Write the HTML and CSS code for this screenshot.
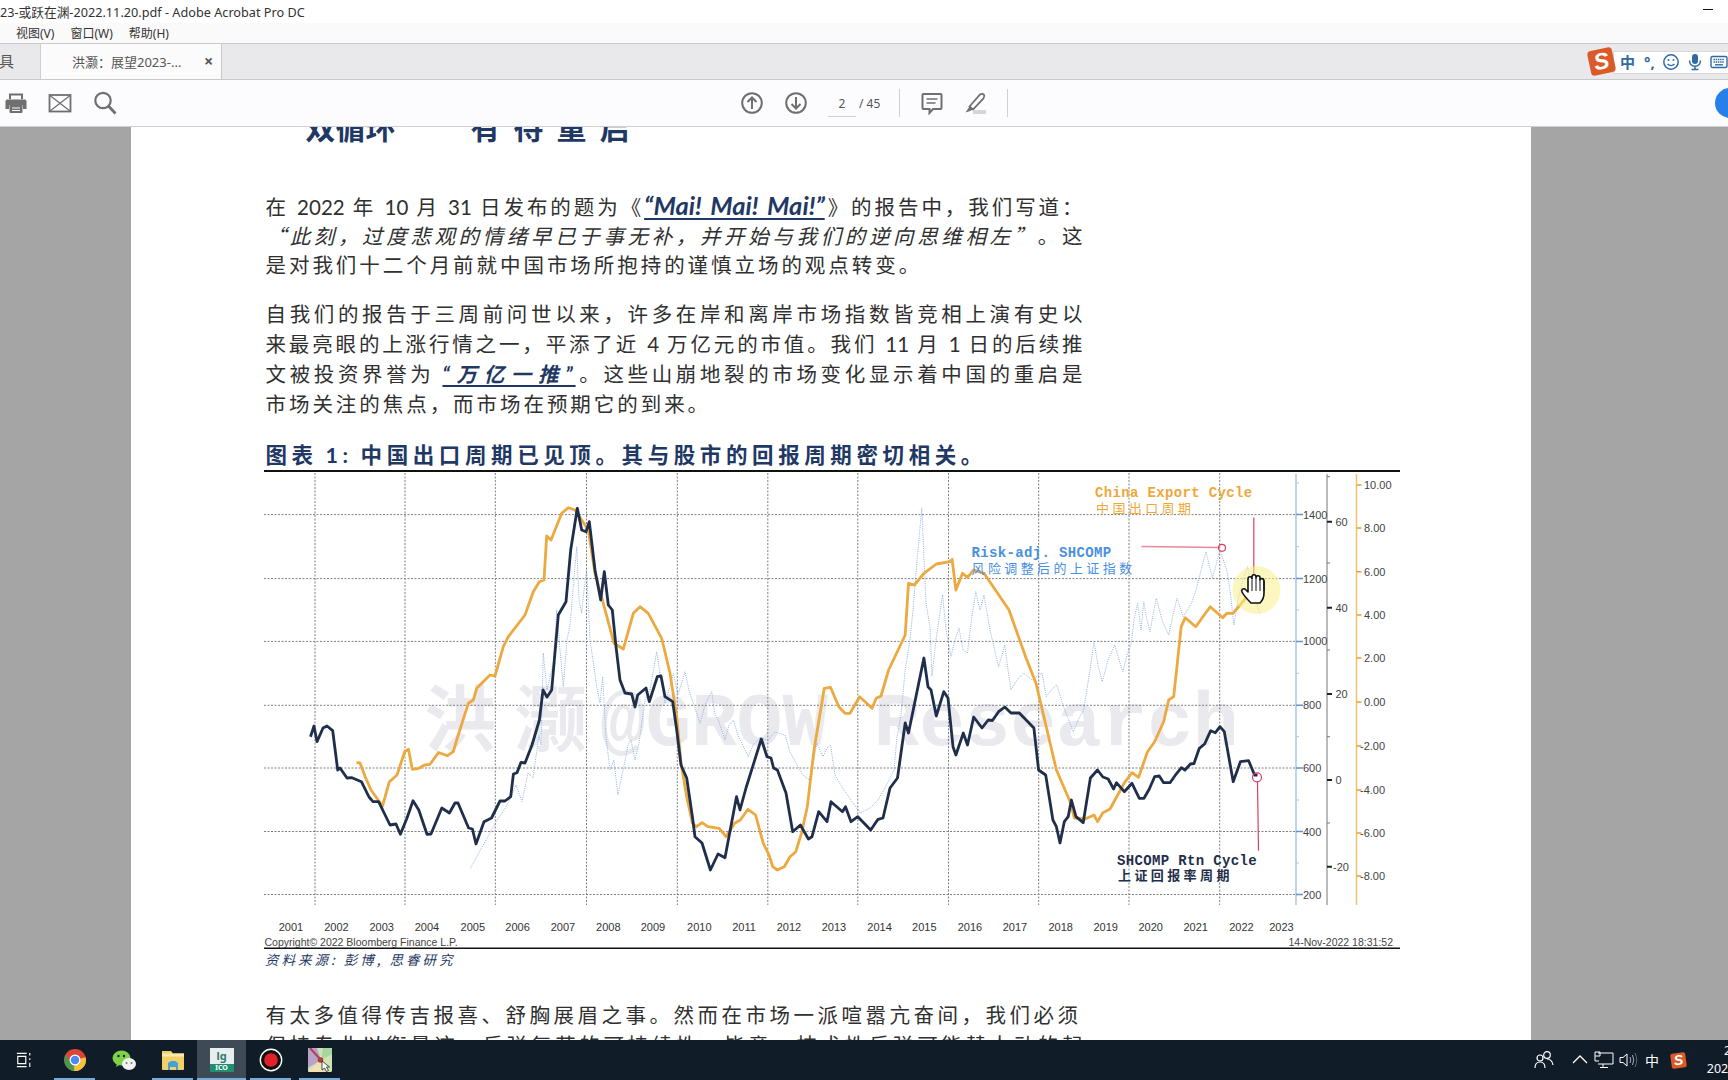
FILE: index.html
```html
<!DOCTYPE html>
<html lang="zh">
<head>
<meta charset="utf-8">
<title>Adobe Acrobat Pro DC</title>
<link rel="stylesheet" href="styles.css">
</head>
<body>
<div class="app">
  <div class="titlebar">
    <span class="title-text">23-或跃在渊-2022.11.20.pdf - Adobe Acrobat Pro DC</span>
    <span class="minimize"></span>
  </div>
  <div class="menubar">
    <span class="menu-item">视图(V)</span>
    <span class="menu-item">窗口(W)</span>
    <span class="menu-item">帮助(H)</span>
  </div>
  <div class="tabbar">
    <span class="tab-tools">具</span>
    <div class="tab-active">
      <span class="tab-name">洪灏&#xFF1A;展望2023-...</span>
      <span class="tab-close">×</span>
    </div>
    <div class="ime">
      <span class="ime-logo">S</span>
      <div class="ime-bar">
        <span class="ime-zh">中</span>
        <span class="ime-punc">°,</span>
        <svg class="ime-icon" viewBox="0 0 18 18"><circle cx="9" cy="9" r="7.2" fill="none" stroke="#2f6aa3" stroke-width="1.5"/><circle cx="6.5" cy="7" r="1" fill="#2f6aa3"/><circle cx="11.5" cy="7" r="1" fill="#2f6aa3"/><path d="M5.5 11q3.5 3.2 7 0" fill="none" stroke="#2f6aa3" stroke-width="1.3"/></svg>
        <svg class="ime-icon" viewBox="0 0 18 18"><rect x="6" y="1" width="6" height="10" rx="3" fill="#2f6aa3"/><path d="M3.5 7.5q.3 5.7 5.5 5.7t5.500-5.700M9 13v3M5.500 16.500h7" fill="none" stroke="#2f6aa3" stroke-width="1.5"/></svg>
        <svg class="ime-icon" viewBox="0 0 18 18"><rect x="1" y="3.500" width="16" height="11" rx="1.500" fill="none" stroke="#2f6aa3" stroke-width="1.400"/><path d="M3.500 6.500h11M3.500 9h11" stroke="#2f6aa3" stroke-width="1.500" stroke-dasharray="1.500 .7"/><path d="M5 11.800h8" stroke="#2f6aa3" stroke-width="1.400"/></svg>
      </div>
    </div>
  </div>
  <div class="toolbar">
    <svg class="tool t-print" viewBox="0 0 24 24"><path d="M6 8V3.500h12V8" fill="none" stroke="#6f6f6f" stroke-width="2"/><path d="M3 8.500h18a1.500 1.500 0 0 1 1.500 1.500v8h-3.500v-3.500H5V18H1.500v-8A1.500 1.500 0 0 1 3 8.500z" fill="#6f6f6f"/><rect x="5.500" y="14" width="13" height="8" rx="1" fill="#6f6f6f"/><path d="M8 17h8M8 19.500h8" stroke="#fff" stroke-width="1.100"/></svg>
    <svg class="tool t-mail" viewBox="0 0 24 24"><rect x="1.500" y="4" width="21" height="16.500" fill="none" stroke="#6f6f6f" stroke-width="1.800"/><path d="M2 4.500l20 15.500M22 4.500L2 20" fill="none" stroke="#6f6f6f" stroke-width="1.300"/></svg>
    <svg class="tool t-search" viewBox="0 0 24 24"><circle cx="10" cy="9.500" r="7.700" fill="none" stroke="#6f6f6f" stroke-width="2.200"/><path d="M15.500 15l7 7.500" stroke="#6f6f6f" stroke-width="2.800"/></svg>
    <svg class="tool t-up" viewBox="0 0 24 24"><circle cx="12" cy="12" r="9.800" fill="none" stroke="#6f6f6f" stroke-width="2"/><path d="M12 18V6.500M7.500 11L12 6.500l4.500 4.500" fill="none" stroke="#6f6f6f" stroke-width="2"/></svg>
    <svg class="tool t-down" viewBox="0 0 24 24"><circle cx="12" cy="12" r="9.800" fill="none" stroke="#6f6f6f" stroke-width="2"/><path d="M12 6v11.500M7.500 13l4.500 4.500 4.500-4.500" fill="none" stroke="#6f6f6f" stroke-width="2"/></svg>
    <span class="page-input">2</span>
    <span class="page-total">/ 45</span>
    <span class="sep sep-a"></span>
    <svg class="tool t-comment" viewBox="0 0 24 24"><path d="M3.500 3h17a1 1 0 0 1 1 1v13a1 1 0 0 1-1 1H13l-3.500 4v-4h-6a1 1 0 0 1-1-1V4a1 1 0 0 1 1-1z" fill="none" stroke="#6f6f6f" stroke-width="2"/><path d="M6.500 8h11M6.500 12h9" stroke="#6f6f6f" stroke-width="1.300"/></svg>
    <svg class="tool t-high" viewBox="0 0 24 24"><path d="M6.500 15.500L17 3.500q2.500-1.500 4 .3 1 1.500-.5 3.500L10 18.500z" fill="none" stroke="#6f6f6f" stroke-width="1.800"/><path d="M6.500 15.500l3.500 3-3 1.500-4.500 1.500z" fill="#6f6f6f"/><rect x="10" y="19" width="13" height="4" fill="#d5d5d5"/></svg>
    <span class="sep sep-b"></span>
    <span class="blue-dot"></span>
  </div>

  <main class="viewer">
    <article class="page">
      <h1 class="doc-h"><span class="h-a">双循环</span><span class="h-b">有待重启</span></h1>
      <p class="para">
        <span class="ln">在 2022 年 10 月 31 日发布的题为《<em class="link-em mai">“Mai! Mai! Mai!”</em>》的报告中&#xFF0C;我们写道&#xFF1A;</span>
        <span class="ln"><i class="cjk">“此刻&#xFF0C;过度悲观的情绪早已于事无补&#xFF0C;并开始与我们的逆向思维相左”</i>。这</span>
        <span class="ln ln-last">是对我们十二个月前就中国市场所抱持的谨慎立场的观点转变。</span>
      </p>
      <p class="para">
        <span class="ln">自我们的报告于三周前问世以来&#xFF0C;许多在岸和离岸市场指数皆竞相上演有史以</span>
        <span class="ln">来最亮眼的上涨行情之一&#xFF0C;平添了近 4 万亿元的市值。我们 11 月 1 日的后续推</span>
        <span class="ln">文被投资界誉为<em class="link-em tui">“万亿一推”</em>。这些山崩地裂的市场变化显示着中国的重启是</span>
        <span class="ln ln-last">市场关注的焦点&#xFF0C;而市场在预期它的到来。</span>
      </p>
      <h2 class="fig-title">图表 1: 中国出口周期已见顶。其与股市的回报周期密切相关。</h2>
      <svg class="chart" viewBox="264 472 1140 493" width="1140" height="493">
        <text class="wm" x="424" y="745">洪</text>
        <text class="wm" x="515" y="745">灏</text>
        <text class="wm wm-l" x="600" y="745">@GROW Research</text>

        <g class="grid">
          <path d="M264 514.600H1296M264 578.600H1296M264 641.400H1296M264 705.300H1296M264 768H1296M264 831.500H1296M264 894.500H1296"/>
          <path d="M315 473V905M405 473V905M495.300 473V905M586.500 473V905M677.300 473V905M767.800 473V905M857.800 473V905M948.500 473V905M1038.700 473V905M1129 473V905M1219.700 473V905"/>
        </g>

        <polyline class="l-blue" points="470.500,868 475,860 497,820 503,812 510.700,798 516,785 522,801.700 528,773 533,778 539,735 541,745 543.300,653 547,690 553.300,663 556.700,610 560,650 563.300,686.700 567,640 570,625 576.700,546.700 579,600 581.700,613.300 584,590 586.700,570 590,640 593,660 596.700,686.700 600,703 602.700,676.700 606,736.700 610,770 614,760 617.800,795 623.600,768 628,745 631,740 635,760 639,743 645,700 650,690 656.700,651.700 661,680 665,703 669,690 673.300,673.300 678,695 685,671.700 689,690 693.300,703.300 700,723.300 705,705 711.700,691.700 715,715 718.300,720 725,740 729,725 733.300,720 738,735 748.300,756.700 753,745 760,738 768.400,740 775,732 785,735 790,752 796,763 803,775 809,780 813,765 816.800,743 823,756.700 827,748 830.500,745 835,775 841.700,786.700 853,803 860,813 870,808 878,800 885,788 894,770 897,736.700 901,715 905.200,670 910,640 913,610 917.700,553 921.800,508.300 924,560 926,603 930,626.700 932,676 936,640 942.600,595 946,630 950.900,656.700 955,640 959,628 963,650 967.500,653 972,615 975.800,591.700 980,610 984,595 990,630 998.600,666.700 1004.800,645 1008,670 1011,690 1017,680 1023.500,673 1032,680 1042,673 1046.300,696.700 1051,690 1056.700,685 1064,708 1073.300,731.700 1078,720 1083.700,710 1090,670 1094,641.700 1098,665 1102.300,681.700 1108,660 1114.800,645 1119,660 1123,671.700 1127,655 1131.400,643.300 1134,620 1137.600,603.300 1141,630 1143.800,601.700 1147,620 1150,631.700 1153,615 1156.300,598.300 1162,620 1168.700,635 1173,615 1177,598.300 1183.200,616.700 1191.500,603.300 1196,590 1199.800,575 1206,551.700 1212.300,578 1216,565 1219.800,550 1226.800,570 1230,590 1233.900,625 1238,600 1243,580 1247.600,566.700 1252,590 1260,613.300"/>

        <polyline class="l-orange" points="356.400,762.700 360,763 365.200,776.700 371,790 382.500,806 389.400,781.700 397,775 404.700,751.700 408.500,749.300 412.300,769.300 418.800,768.300 424.600,765 430,764.300 438.500,752.500 447.500,755.700 453.300,751.700 456.700,740 468.300,703.300 473.300,700 476.700,688.300 490,675 495,676 503.300,646.700 508.300,636.700 525,615 533.300,591.700 539.300,581.700 544,580 546.700,536 551,540 561.700,513.300 568.300,507.700 575,510 588.300,530 595,573.300 603.300,603.300 614,643.300 623.300,649 633.300,613.300 640,606.700 648.300,613.300 661.700,638.300 670,673.300 676.700,716.700 681,763 686.700,796.700 692.400,823 696.300,826.700 702,822.700 707.800,826.700 719.200,828.300 726,836.700 734.600,823.300 740.300,820 748,809.300 755.600,815 763.300,843.300 769,855 772.800,866.700 777.400,870 784.300,866.700 790,856.700 795.800,851.700 801.500,833.300 807.300,806.700 814,750 824.300,688.300 830.500,687.300 838.800,706.700 845,713.300 850,713.300 859.600,696.700 872,708.300 876.200,698.300 881,696 888.600,670 905.200,635 908.500,583.300 914.400,585 923.900,573.300 936.300,564 950,561.700 952.100,559.300 955.900,590 962.500,573.300 967.500,577.300 973.700,570 984,573.300 1009,610 1025.600,656.700 1036,683.300 1046.300,727 1056.400,770 1070.700,803 1074.300,818 1085,819 1094,815 1097.500,821.700 1102.900,812.700 1110,809 1124.300,783 1132,772.700 1138.600,777.300 1147.500,751.700 1154.600,741.700 1163.600,721.700 1168.700,700 1173.700,696.700 1181.200,626.700 1185.300,617.700 1195.700,626.700 1210.200,606.700 1222.700,617.700 1226.800,613.300 1233,613.300 1243.400,601 1250,592"/>

        <polyline class="l-dark" points="310.500,736.700 314,726 317,741.700 323,728 327,726 332.700,730.700 337.700,770 340,768 347,778 352,777.700 361.400,781.700 369,797 373,801.700 378.600,801.700 390,825 396,824 400.400,834.300 407,818 413,800.700 418.800,810 427,834.300 431,834 441.800,808 449.400,813 455,803 458,803 468.600,828 472.400,829 476,844 484,821.700 491.500,818 500,801 505,801 510.700,796.700 513.400,774 517,772.700 521,762.300 525,763 532,745 539.400,720 543,690 547,697 551.700,690 558.300,615 566,601.700 570.700,550 577.300,508.300 581.700,530 586,531.700 589.300,521.700 595,570 600.700,600 604.300,571.700 608.300,605 612.300,610 616,646.700 620,680 625,693 631.700,694 635,707 637.700,695 646,688 649.300,701.700 657.300,676.700 661,676 665,696.700 672.700,701.700 676.700,730 681,765 686.700,778 692.400,816.700 695,836.700 702,843 710.400,870 718,854 725,857.700 736.500,796.700 740,810 746,788 761.300,739 767,756.700 771,758 773.600,768 777.400,770 786,793 792.700,831.700 800.400,825 808.400,839 812,836.700 818.700,811.700 827,821.700 831,801.700 842.500,811.700 845.500,806.700 851,821.700 857.800,816.700 870.700,830 878,819.300 883,818 890,788 897.500,778 905.200,723 908.500,733 923.900,658 928,686.700 931,690 936.300,716 943.800,691.700 948,698 953,746.700 955.900,755 963.300,733 967.500,745 973.700,717 982,728 988.200,720 992.400,720.500 998.600,711.700 1004.800,707 1011,713 1019.300,713 1033.900,728 1038.600,770 1045.700,775 1052.900,820 1056.400,826.700 1060,843 1064.300,821.700 1068.200,816.700 1071.400,800 1076,816.700 1083.200,822.700 1090.400,778 1097.500,770 1102.900,777 1108.200,779 1113.600,789 1116.400,782.700 1124.300,791.700 1132,783.300 1139.300,798.300 1144,798.300 1149.300,789 1154.600,776.700 1159.300,776 1163.600,782.700 1170,782.700 1176,774.300 1181.400,767.700 1185,770 1190.400,764 1194,763.500 1199.300,748.300 1204.600,744 1210.700,730.700 1215.400,732.700 1220,726.700 1224.300,731.700 1233.200,781.700 1240.400,761.700 1248.600,760.700 1254.600,775 1257.500,775"/>

        <path class="a-blue" d="M1296 474V905"/>
        <path class="a-blue-t" d="M1296 514.600h7M1296 578.600h7M1296 641.400h7M1296 705.300h7M1296 768h7M1296 831.500h7M1296 894.500h7"/>
        <path class="a-blue-m" d="M1296 483h3M1296 546.600h3M1296 610h3M1296 673.300h3M1296 736.700h3M1296 800h3M1296 863h3"/>
        <path class="a-black" d="M1327 474V905M1327 476.700h3M1327 563h3M1327 650h3M1327 736.700h3M1327 823h3"/>
        <path class="a-black-t" d="M1327 521.700h5M1327 607.700h5M1327 694h5M1327 780h5M1327 866.700h5"/>
        <path class="a-orange" d="M1356.500 474V905"/>
        <path class="a-orange-t" d="M1356.500 485h5M1356.500 528h5M1356.500 571.700h5M1356.500 615h5M1356.500 658h5M1356.500 702h5M1356.500 746h5M1356.500 790h5M1356.500 833h5M1356.500 876h5"/>

        <g class="ax">
          <text x="1303" y="518.500">1400</text><text x="1303" y="582.500">1200</text><text x="1303" y="645.300">1000</text><text x="1303" y="709.200">800</text><text x="1303" y="772">600</text><text x="1303" y="835.500">400</text><text x="1303" y="898.500">200</text>
          <text x="1335.500" y="525.700">60</text><text x="1335.500" y="611.700">40</text><text x="1335.500" y="698">20</text><text x="1335.500" y="784">0</text><text x="1333" y="870.700">-20</text>
          <text x="1364" y="489">10.00</text><text x="1364" y="532">8.00</text><text x="1364" y="575.700">6.00</text><text x="1364" y="619">4.00</text><text x="1364" y="662">2.00</text><text x="1364" y="706">0.00</text><text x="1360" y="750">-2.00</text><text x="1360" y="794">-4.00</text><text x="1360" y="837">-6.00</text><text x="1360" y="880">-8.00</text>
        </g>
        <g class="yr">
          <text x="291" y="931">2001</text><text x="336.500" y="931">2002</text><text x="381.700" y="931">2003</text><text x="427" y="931">2004</text><text x="472.800" y="931">2005</text><text x="517.600" y="931">2006</text><text x="563" y="931">2007</text><text x="608.300" y="931">2008</text><text x="653" y="931">2009</text><text x="699.300" y="931">2010</text><text x="744" y="931">2011</text><text x="789" y="931">2012</text><text x="834" y="931">2013</text><text x="879.600" y="931">2014</text><text x="924.300" y="931">2015</text><text x="970" y="931">2016</text><text x="1015" y="931">2017</text><text x="1060.700" y="931">2018</text><text x="1105.700" y="931">2019</text><text x="1150.700" y="931">2020</text><text x="1195.700" y="931">2021</text><text x="1241.400" y="931">2022</text><text x="1281.400" y="931">2023</text>
        </g>
        <text class="foot" x="264.500" y="945.500">Copyright© 2022 Bloomberg Finance L.P.</text>
        <text class="foot" x="1288.500" y="945.500">14-Nov-2022 18:31:52</text>
        <path class="rule" d="M264 948.200H1400"/>
        <text class="src" x="265" y="965">资料来源: 彭博, 思睿研究</text>

        <text class="lab lab-or" x="1095" y="497">China Export Cycle</text>
        <text class="lab-cn lab-or" x="1096" y="513">中国出口周期</text>
        <text class="lab lab-bl" x="971.500" y="557">Risk-adj. SHCOMP</text>
        <text class="lab-cn lab-bl" x="971.500" y="573">风险调整后的上证指数</text>
        <text class="lab lab-dk" x="1117" y="865">SHCOMP Rtn Cycle</text>
        <text class="lab-cn lab-dk" x="1118" y="880">上证回报率周期</text>

        <path class="red-soft" d="M1141.500 546.500L1218 547.500"/>
        <circle class="red-c" cx="1222" cy="547.800" r="3.500"/>
        <path class="red" d="M1253.800 517.500V590M1257.500 781.500L1258.500 850.700"/>
        <circle class="red-c" cx="1257" cy="777.300" r="4.500"/>

        <circle class="spot" cx="1256.500" cy="590" r="24"/>
        <path class="hand" d="M1251 603c-3-3-7-7-9-11-1-2 1-4 3-3l3 3v-13c0-3 4-3 4 0v-2c0-3 4-3 4 0v1c0-3 4-3 4 0v2c0-2 4-2 4 1v12c0 5-2 8-4 10h-9z"/>
        <path class="hand-l" d="M1252 580v11M1256 578v13M1260 579v12M1264 581v10"/>
      </svg>
      <p class="para para-tail">
        <span class="ln ln-fit">有太多值得传吉报喜、舒胸展眉之事。然而在市场一派喧嚣亢奋间&#xFF0C;我们必须</span>
        <span class="ln">保持专业以衡量这一反弹复苏的可持续性。毕竟&#xFF0C;技术性反弹可能替人动的起</span>
      </p>
    </article>
  </main>

  <footer class="taskbar">
    <span class="tb-view">
      <svg class="tv-ic" viewBox="0 0 18 18"><path d="M1 1.500h11M1 16.500h11M2 5h9v8H2zM15.500 1v3M15.500 7v2M15.500 12v5" fill="none" stroke="#fff" stroke-width="1.300"/></svg>
    </span>
    <span class="tb-app tb-run">
      <svg class="tb-ic" viewBox="0 0 24 24"><circle cx="12" cy="12" r="11" fill="#db4437"/><path d="M12 12L22.500 15A11 11 0 0 1 8 22.300z" fill="#4fa853"/><path d="M12 12l10.600-2.800A11 11 0 0 1 11 23z" fill="#f5c33b"/><path d="M3 6.500L8 16l3 7a11 11 0 0 1-8-16.500z" fill="#3f9e4d"/><circle cx="12" cy="12" r="5.500" fill="#fff"/><circle cx="12" cy="12" r="4.200" fill="#4a8af0"/></svg>
    </span>
    <span class="tb-app">
      <svg class="tb-ic" viewBox="0 0 24 24"><ellipse cx="9.500" cy="10" rx="9" ry="7.500" fill="#7fd148"/><path d="M5 15l-1 4 4-2.500z" fill="#7fd148"/><ellipse cx="17" cy="16" rx="7" ry="6" fill="#f2f2f2"/><circle cx="6.500" cy="8" r="1.200" fill="#16222d"/><circle cx="12" cy="8" r="1.200" fill="#16222d"/><circle cx="14.500" cy="15" r="1" fill="#777"/><circle cx="19.500" cy="15" r="1" fill="#777"/></svg>
    </span>
    <span class="tb-app tb-run">
      <svg class="tb-ic" viewBox="0 0 24 24"><path d="M1 3h9l2 2.500h11V21a1 1 0 0 1-1 1H2a1 1 0 0 1-1-1z" fill="#f3cf6a"/><rect x="1" y="5.500" width="22" height="3" fill="#fbe9a9"/><path d="M7 22v-7l3-2h4l3 2v7z" fill="#3fa3d8"/><rect x="9" y="19" width="6" height="3" fill="#f3cf6a"/></svg>
    </span>
    <span class="tb-app tb-run tb-act">
      <span class="ico-tile"><span class="ico-top">lg</span><span class="ico-band">ICO</span></span>
    </span>
    <span class="tb-app tb-run">
      <svg class="tb-ic" viewBox="0 0 24 24"><circle cx="12" cy="12" r="10.700" fill="#111" stroke="#fff" stroke-width="1.400"/><circle cx="12" cy="12" r="6.800" fill="#e3202a"/></svg>
    </span>
    <span class="tb-app tb-run">
      <svg class="tb-ic" viewBox="0 0 24 24"><rect width="24" height="24" rx="1.500" fill="#cfe3b5"/><path d="M0 0h9l4 12-13 8z" fill="#b9a2c8"/><path d="M13 12L24 6V0h-9z" fill="#a6d79f"/><path d="M13 12L0 24h15z" fill="#f3e0b5"/><path d="M2 0l10 11" stroke="#a5445c" stroke-width="2"/><circle cx="12.500" cy="12" r="2.800" fill="#b33b3b"/><path d="M14 13v9l2.500-2 2 3.500 2-1-2-3.500h3z" fill="#fff" stroke="#222" stroke-width=".8"/></svg>
    </span>
    <div class="tray">
      <svg class="tr tr-people" viewBox="0 0 20 20"><circle cx="13" cy="5" r="3.300" fill="none" stroke="#fff" stroke-width="1.200"/><circle cx="6" cy="8" r="3" fill="none" stroke="#fff" stroke-width="1.200"/><path d="M1 18q0-6 5-6t5 6M13 9q5 0 6 6" fill="none" stroke="#fff" stroke-width="1.200"/></svg>
      <svg class="tr tr-caret" viewBox="0 0 20 20"><path d="M3 13l7-7 7 7" fill="none" stroke="#fff" stroke-width="1.300"/></svg>
      <svg class="tr" viewBox="0 0 20 20"><path d="M4 3h15v11H4M9 14v3M6 17.500h8M1 2h5v4H1zM1 6v5h4" fill="none" stroke="#fff" stroke-width="1"/></svg>
      <svg class="tr" viewBox="0 0 20 20"><path d="M2 7.500h3L9 4v12l-4-3.500H2z" fill="none" stroke="#fff" stroke-width="1"/><path d="M12 7q1.500 3 0 6M14.500 5q2.500 5 0 10" fill="none" stroke="#aab" stroke-width="1"/><path d="M17 3q3.500 7 0 14" fill="none" stroke="#667" stroke-width="1"/></svg>
      <span class="tr-zh">中</span>
      <span class="tr-sogou">S</span>
      <div class="clock"><span>20:47</span><span>2022/11/21</span></div>
    </div>
  </footer>
</div>
</body>
</html>
```
FILE: styles.css
```css
* { box-sizing: border-box; }
html, body { margin: 0; padding: 0; height: 100%; overflow: hidden; }
body { font-family: "Noto Sans", "Noto Sans CJK SC", sans-serif; color: #2b2b2b; }
.app { width: 1728px; height: 1080px; display: flex; flex-direction: column; overflow: hidden; background: #fff; }

.titlebar { height: 23px; flex: none; display: flex; align-items: center; justify-content: space-between; background: #fff; padding-right: 15px; }
.title-text { font-size: 12.700px; color: #333; white-space: nowrap; }
.minimize { width: 10px; height: 1px; background: #111; margin-bottom: 5px; }

.menubar { height: 20px; flex: none; display: flex; align-items: center; background: #fbfafb; padding-left: 16px; gap: 16px; border-bottom: 0; }
.menu-item { font-size: 12px; color: #333; white-space: nowrap; }

.tabbar { height: 37px; flex: none; display: flex; background: #e9e8ea; border-top: 1px solid #cbc8cc; border-bottom: 1px solid #c9c9cb; position: relative; }
.tab-tools { width: 42px; font-size: 15px; color: #555; line-height: 34px; padding-left: 0; margin-left: -1px; flex: none; border-right: 1px solid #cfcfcf; }
.tab-active { width: 181px; flex: none; background: #fbfbfb; border-right: 1px solid #c9c9cb; display: flex; align-items: center; padding-left: 31px; }
.tab-name { font-size: 13px; color: #555; white-space: nowrap; width: 132px; }
.tab-close { font-size: 16px; font-weight: 700; color: #555; margin-top: -1px; }

.ime { margin-left: auto; display: flex; align-items: center; margin-top: 1px; }
.ime-logo { width: 25px; height: 25px; background: #dc5a28; border-radius: 4px; transform: rotate(-12deg); color: #fff; font: italic 700 23px/25px "Liberation Sans", sans-serif; text-align: center; position: relative; z-index: 1; margin-right: -1px; margin-top: -1px; }
.ime-bar { width: 115px; height: 23px; background: #fff; border: 1px solid #d7d7d7; border-right: 0; display: flex; align-items: center; padding-left: 6px; gap: 6px; }
.ime-zh { font-size: 15px; font-weight: 700; color: #2f6aa3; line-height: 20px; }
.ime-punc { font-size: 15px; font-weight: 700; color: #2f6aa3; width: 17px; line-height: 18px; margin-left: 3px; }
.ime-icon { width: 18px; height: 18px; flex: none; }

.toolbar { height: 47px; flex: none; display: flex; align-items: center; background: #fcfcfe; border-bottom: 1px solid #cfcfd2; padding-left: 4px; }
.tool { width: 24px; height: 24px; flex: none; }
.t-mail { margin-left: 20px; }
.t-search { margin-left: 21px; }
.t-up { margin-left: 623px; }
.t-down { margin-left: 20px; }
.page-input { width: 28px; margin-left: 20px; height: 27px; margin-top: 0; border-bottom: 1px solid #cfcfcf; font-size: 12px; color: #555; text-align: center; line-height: 28px; }
.page-total { font-size: 12px; color: #555; margin-left: 3px; white-space: nowrap; width: 40px; }
.sep { width: 1px; height: 28px; background: #d0d0d0; flex: none; }
.sep-a { margin-left: 0; }
.t-comment { margin-left: 20px; }
.t-high { margin-left: 19px; }
.sep-b { margin-left: 20px; }
.blue-dot { width: 30px; height: 30px; border-radius: 50%; background: #2680eb; margin-left: auto; margin-right: -17px; flex: none; }

.viewer { flex: 1; min-height: 0; background: #a5a5a5; overflow: hidden; }
.page { width: 1400px; margin-left: 131px; margin-top: -17px; height: 960px; background: #fff; padding-left: 134.500px; }
.doc-h { margin: 0 0 44px; height: 36px; font-size: 30px; line-height: 36px; font-weight: 700; color: #1f3864; white-space: nowrap; padding-left: 40px; }
.h-a { letter-spacing: 0; }
.h-b { letter-spacing: 13px; margin-left: 75px; }

.para { margin: 0 0 19px; width: 817px; font-family: Lato, "Noto Sans CJK SC", sans-serif; font-size: 20.500px; color: #303030; }
.ln { display: block; height: 30px; line-height: 30px; text-align: justify; text-align-last: justify; white-space: nowrap; }
.ln-last { text-align-last: left; letter-spacing: 2.950px; }
.ln-fit { text-align-last: left; letter-spacing: 3.500px; }
.cjk { font-family: "Noto Sans CJK SC", sans-serif; }
.link-em { font-style: italic; font-weight: 700; color: #1f3864; text-decoration: underline; text-decoration-thickness: 2px; text-underline-offset: 3px; }
.mai { font-size: 25.500px; }
.tui { letter-spacing: 3px; margin-left: 8px; }

.fig-title { margin: 22px 0 0 -2px; width: 1136px; height: 31px; border-bottom: 2px solid #111; font-family: Lato, "Noto Sans CJK SC", sans-serif; font-size: 21.500px; line-height: 28px; font-weight: 700; color: #1f3864; letter-spacing: 4.600px; word-spacing: -2px; padding-left: 2px; white-space: nowrap; }
.chart { display: block; margin-left: -1.500px; font-family: "Liberation Sans", "Noto Sans CJK SC", sans-serif; overflow: visible; }
.para-tail { margin-top: 35px; }

.wm { font-family: "Noto Sans CJK SC", sans-serif; font-size: 72px; fill: #e9e9ee; font-weight: 700; }
.wm-l { font-family: "Liberation Mono", monospace; font-size: 76px; }
.grid path { fill: none; stroke: #808080; stroke-width: 1; stroke-dasharray: 2 1.500; }
.l-blue { fill: none; stroke: #8fb2e2; stroke-width: 1; stroke-dasharray: 1 1.200; }
.l-orange { fill: none; stroke: #eba93f; stroke-width: 2.800; stroke-linejoin: round; }
.l-dark { fill: none; stroke: #1f2f4b; stroke-width: 2.800; stroke-linejoin: round; }
.a-blue { stroke: #a9c6ea; stroke-width: 1.500; fill: none; }
.a-blue-t { stroke: #5f93d3; stroke-width: 1.500; fill: none; }
.a-blue-m { stroke: #a9c6ea; stroke-width: 1; fill: none; }
.a-black { stroke: #777; stroke-width: 1; fill: none; }
.a-black-t { stroke: #222; stroke-width: 2; fill: none; }
.a-orange { stroke: #f1c272; stroke-width: 1.500; fill: none; }
.a-orange-t { stroke: #e5a233; stroke-width: 1.500; fill: none; }
.ax text { font-size: 11px; fill: #444; }
.yr text { font-size: 11px; fill: #333; text-anchor: middle; }
.foot { font-size: 10.500px; fill: #444; }
.rule { stroke: #111; stroke-width: 1.500; fill: none; }
.src { font-family: "Noto Sans CJK SC", sans-serif; font-size: 13.500px; font-style: italic; fill: #1f3864; letter-spacing: 3px; }
.lab { font-family: "Liberation Mono", monospace; font-size: 14px; letter-spacing: .35px; font-weight: 700; }
.lab-cn { font-family: "Noto Sans CJK SC", sans-serif; font-size: 13px; letter-spacing: 3.400px; }
.lab-or { fill: #eea83a; }
.lab-bl { fill: #4a90e0; }
.lab-dk { fill: #1f2f4b; font-weight: 700; }
.red { stroke: #d8405f; stroke-width: 1.200; fill: none; }
.red-soft { stroke: #e58a9a; stroke-width: 1.500; fill: none; }
.red-c { stroke: #d8405f; stroke-width: 1.200; fill: none; }
.spot { fill: #f7f08a; fill-opacity: .55; }
.hand { fill: #fff; stroke: #111; stroke-width: 1.600; stroke-linejoin: round; }
.hand-l { stroke: #111; stroke-width: 1; fill: none; }

.taskbar { height: 40px; flex: none; display: flex; align-items: center; background: #101c28; color: #fff; position: relative; }
.tb-view { width: 50px; height: 40px; flex: none; display: flex; align-items: center; padding-left: 16px; }
.tv-ic { width: 16px; height: 16px; }
.tb-app { width: 49px; height: 40px; flex: none; display: flex; align-items: center; justify-content: center; position: relative; }
.tb-run::after { content: ""; position: absolute; left: 4px; right: 4px; bottom: 0; height: 2px; background: #79abd6; }
.tb-act { background: #3e4b57; }
.tb-act::after { left: 0; right: 0; }
.tb-ic { width: 24px; height: 24px; }
.ico-tile { width: 24px; height: 24px; background: #e6efee; display: flex; flex-direction: column; align-items: center; justify-content: space-between; overflow: hidden; }
.ico-top { font-size: 11px; line-height: 15px; font-weight: 700; color: #347a72; }
.ico-band { width: 100%; height: 8px; background: #1f8f6f; color: #fff; font-size: 7px; line-height: 8px; font-weight: 700; text-align: center; }
.tray { margin-left: auto; margin-right: -52px; display: flex; align-items: center; height: 40px; }
.tr { width: 20px; height: 20px; flex: none; margin: 0 2px; }
.tr-people { margin-right: 14px; }
.tr-zh { width: 24px; font-size: 14px; text-align: center; flex: none; }
.tr-sogou { width: 15px; height: 15px; margin: 0 14px 0 7px; background: #dc5a28; color: #fff; border-radius: 2px; font: italic 700 14px/15px "Liberation Sans", sans-serif; text-align: center; flex: none; transform: rotate(-8deg); }
.clock { width: 80px; flex: none; display: flex; flex-direction: column; align-items: center; font-size: 12.500px; line-height: 18px; white-space: nowrap; }
```
